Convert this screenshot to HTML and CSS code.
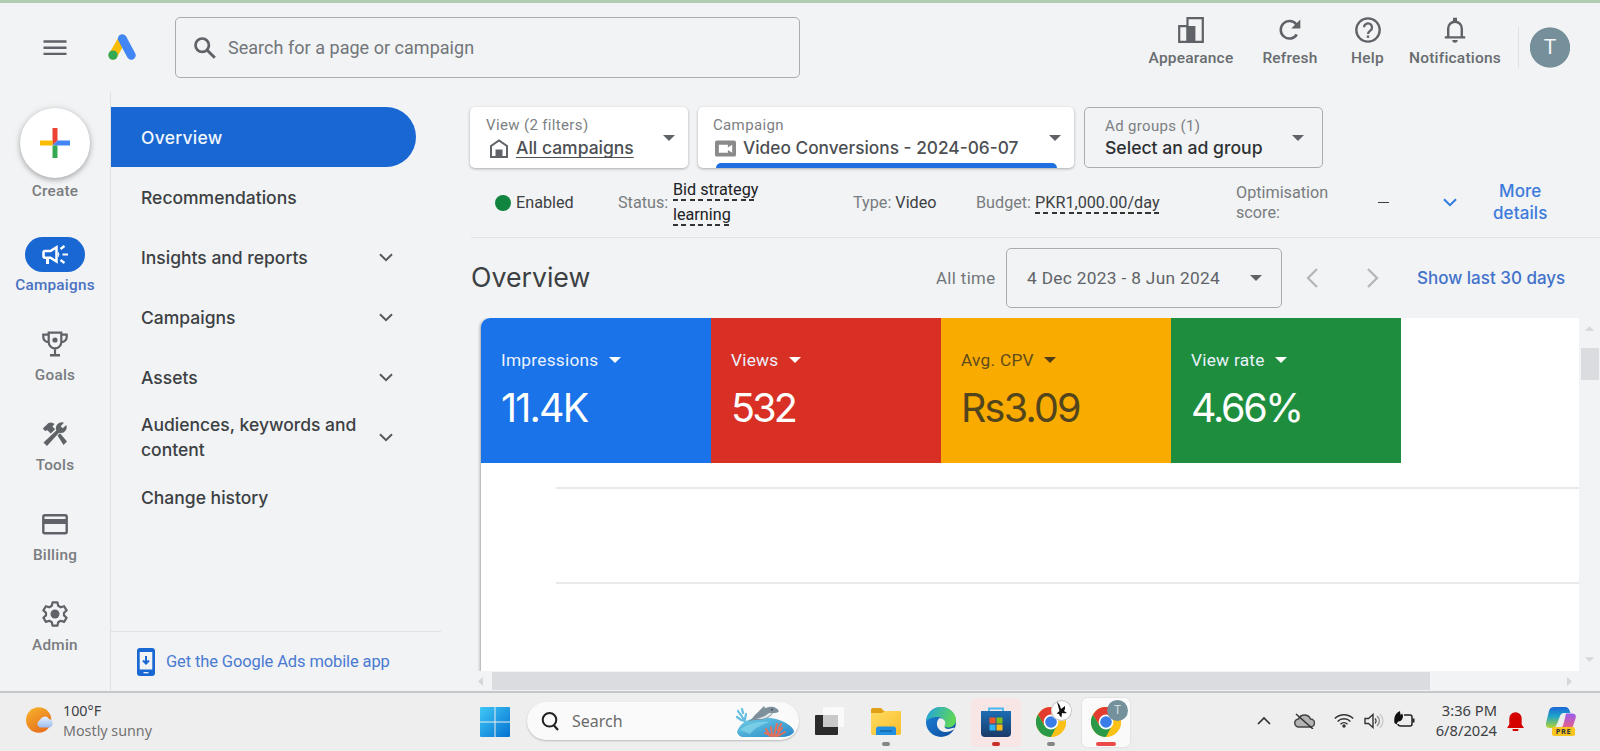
FILE: index.html
```html
<!DOCTYPE html>
<html lang="en">
<head>
<meta charset="utf-8">
<title>Overview - Google Ads</title>
<link rel="stylesheet" href="styles.css">
</head>
<body>
<svg width="0" height="0" class="defs">
  <defs>
    <linearGradient id="win" x1="0" y1="0" x2="1" y2="1"><stop offset="0" stop-color="#3fc8f8"/><stop offset="1" stop-color="#0572d0"/></linearGradient>
    <linearGradient id="sun" x1="0" y1="0" x2="0.6" y2="1"><stop offset="0" stop-color="#f6b52c"/><stop offset="1" stop-color="#e8701c"/></linearGradient>
    <linearGradient id="cloud" x1="0" y1="0" x2="0" y2="1"><stop offset="0" stop-color="#e6f0ff"/><stop offset="1" stop-color="#9dbcf0"/></linearGradient>
    <linearGradient id="sea" x1="0" y1="0" x2="1" y2="1"><stop offset="0" stop-color="#6fd0e6"/><stop offset="1" stop-color="#2a86c8"/></linearGradient>
    <linearGradient id="edgeTop" x1="0" y1="0" x2="1" y2="0.3"><stop offset="0" stop-color="#1fa2e0"/><stop offset="1" stop-color="#5fd65a"/></linearGradient>
    <linearGradient id="edgeLow" x1="0" y1="0" x2="1" y2="1"><stop offset="0" stop-color="#1b86dc"/><stop offset="1" stop-color="#10489a"/></linearGradient>
    <linearGradient id="store" x1="0" y1="0" x2="0" y2="1"><stop offset="0" stop-color="#1c6db4"/><stop offset="1" stop-color="#1b3a68"/></linearGradient>
    <linearGradient id="folder" x1="0" y1="0" x2="1" y2="1"><stop offset="0" stop-color="#ffdc62"/><stop offset="1" stop-color="#f8bd2c"/></linearGradient>
    <linearGradient id="copA" x1="0" y1="0" x2="0" y2="1"><stop offset="0" stop-color="#1b66d8"/><stop offset="0.45" stop-color="#1fa5c8"/><stop offset="1" stop-color="#b7d32e"/></linearGradient>
    <linearGradient id="copB" x1="0" y1="0" x2="0" y2="1"><stop offset="0" stop-color="#9a5cf0"/><stop offset="1" stop-color="#f0607c"/></linearGradient>
    <symbol id="chev" viewBox="0 0 14 9"><path d="M1 1.200l6 6 6-6" fill="none" stroke="currentColor" stroke-width="2"/></symbol>
    <symbol id="caret" viewBox="0 0 12 6"><path d="M0 0h12L6 6z" fill="currentColor"/></symbol>
    <symbol id="chrome" viewBox="0 0 30 30">
      <circle cx="15" cy="15" r="15" fill="#fbc116"/>
      <path d="M15 15L28 7.500A15 15 0 0 0 2 7.500L8.500 18.700z" fill="#e33b2e"/>
      <path d="M2 7.500A15 15 0 0 0 15 30L21.500 18.700 15 15 8.500 18.700z" fill="#2a9a48"/>
      <path d="M15 8.200H28.400A15 15 0 0 1 15 30L21 18.500z" fill="#fbc116"/>
      <circle cx="15" cy="15" r="7.400" fill="#fff"/><circle cx="15" cy="15" r="5.800" fill="#3b7de8"/>
    </symbol>
  </defs>
</svg>

<div class="screen">
  <header class="topbar">
    <svg class="menu-icon" viewBox="0 0 24 16"><path d="M.5 1.500h23M.5 7.700h23M.5 13.900h23" stroke="#5f6368" stroke-width="2.400"/></svg>
    <svg class="logo" viewBox="0 0 28 26">
      <path d="M14.500 5L5 21.300" stroke="#fbbc04" stroke-width="8.600" stroke-linecap="round"/>
      <path d="M14.300 4.700L23.300 21.300" stroke="#4285f4" stroke-width="8.800" stroke-linecap="round"/>
      <circle cx="5" cy="21.100" r="4.700" fill="#34a853"/>
    </svg>
    <div class="searchbox">
      <svg viewBox="0 0 22 22"><circle cx="8.200" cy="8.200" r="6.700" fill="none" stroke="#5f6368" stroke-width="2.700"/><path d="M13 13l7.800 7.800" stroke="#5f6368" stroke-width="3"/></svg>
      <span>Search for a page or campaign</span>
    </div>
    <div class="actions">
      <div class="action a1"><svg viewBox="0 0 26 26"><path d="M9.500 1.200h15.300v23.600H9.500zM1.200 9.200h8.300v15.600H1.200z" fill="none" stroke="#5f6368" stroke-width="2.200"/><path d="M8.600 9h8.800v16H8.600z" fill="#5f6368"/></svg><span>Appearance</span></div>
      <div class="action a2"><svg viewBox="0 0 26 26"><path d="M19.800 17.500A8.700 8.700 0 1 1 19.200 7.300L22 10" fill="none" stroke="#5f6368" stroke-width="2.500"/><path d="M23.300 2.500v9h-9z" fill="#5f6368"/></svg><span>Refresh</span></div>
      <div class="action a3"><svg viewBox="0 0 26 26"><circle cx="13" cy="13" r="11.700" fill="none" stroke="#5f6368" stroke-width="2.300"/><path d="M9 10.300a4 4 0 1 1 6.300 3.300C13.700 14.800 13 15.200 13 17" fill="none" stroke="#5f6368" stroke-width="2.300"/><path d="M11.800 18.500h2.400v2.400h-2.400z" fill="#5f6368"/></svg><span>Help</span></div>
      <div class="action a4"><svg viewBox="0 0 26 26"><path d="M6.200 20v-8.500a6.800 6.800 0 0 1 13.600 0V20" fill="none" stroke="#5f6368" stroke-width="2.400"/><path d="M2.800 19.300h20.400v2.300H2.800zM11 .8h4v4h-4zM10.300 23h5.400a2.700 2.700 0 0 1-5.400 0z" fill="#5f6368"/></svg><span>Notifications</span></div>
    </div>
    <div class="avatar">T</div>
  </header>

  <div class="body">
    <nav class="rail">
      <div class="create"><svg viewBox="0 0 30 30"><path d="M12.500 0h5v12.500L12.500 17.500z" fill="#ea4335"/><path d="M0 12.500h12.500v5H0z" fill="#fbbc04"/><path d="M17.500 12.500H30v5H12.500z" fill="#4285f4"/><path d="M12.500 17.500h5V30h-5z" fill="#34a853"/></svg></div>
      <span class="rail-label create-label">Create</span>
      <div class="rail-item active"><div class="pill"><svg viewBox="0 0 26 20"><path d="M1.500 7.500q0-1.500 1.500-1.500h5.500l6-3.700v14.200l-6-3.700H3q-1.500 0-1.500-1.500z" fill="none" stroke="#fff" stroke-width="2.500"/><path d="M4 13h3v6H4z" fill="#fff"/><path d="M16 6.500q2.500 3 0 6z" fill="#fff"/><path d="M18.500 4l4-3M20.500 9.500H26M18.500 15l4 3" stroke="#fff" stroke-width="2.200"/></svg></div><span class="rail-label">Campaigns</span></div>
      <div class="rail-item"><svg viewBox="0 0 26 26"><path d="M6.700 1.700h12.600V11a6.300 6.300 0 0 1-12.600 0zM6.700 3.700H1.300V6a5 5 0 0 0 5.600 5M19.300 3.700h5.400V6a5 5 0 0 1-5.600 5M13 17v7" fill="none" stroke="#5f6368" stroke-width="2.200"/><path d="M8 23h10v2.500H8z" fill="#5f6368"/><circle cx="13" cy="9" r="2.600" fill="#5f6368"/></svg><span class="rail-label">Goals</span></div>
      <div class="rail-item"><svg viewBox="0 0 26 26"><path d="M.8 7.500L6.500 2q3.500-1.500 6 1L10.500 5.500l2.700 2.700-4.500 4.300-3.300-3.300L3 10zM15.500 14.500l2.500-2.300 7 8.300-3.500 3.500zM1.500 21.500L14.300 9.500a6 6 0 0 1 7.700-7.800l-3.300 3.600 2 2 3.600-3.300a6 6 0 0 1-7.300 7.800L5 25z" fill="#5f6368"/></svg><span class="rail-label">Tools</span></div>
      <div class="rail-item"><svg viewBox="0 0 26 26"><rect x="1.300" y="4.200" width="23.400" height="18" rx="1.500" fill="none" stroke="#5f6368" stroke-width="2.400"/><path d="M1 8h24v5H1z" fill="#5f6368"/></svg><span class="rail-label">Billing</span></div>
      <div class="rail-item"><svg viewBox="0 0 26 26"><path d="M10.600 1.300h4.800l.8 3.500 2.500 1.500 3.400-1.100 2.500 4.200-2.600 2.300v2.700l2.600 2.300-2.500 4.200-3.400-1.100-2.500 1.500-.8 3.400h-4.800l-.8-3.400-2.500-1.500-3.400 1.100-2.500-4.200L4 14.400v-2.700L1.400 9.400l2.500-4.200 3.400 1.100 2.500-1.500z" fill="none" stroke="#5f6368" stroke-width="2.200" stroke-linejoin="round"/><circle cx="13" cy="13" r="4.500" fill="#5f6368"/></svg><span class="rail-label">Admin</span></div>
    </nav>

    <aside class="side">
      <div class="side-item selected"><span>Overview</span></div>
      <div class="side-item"><span>Recommendations</span></div>
      <div class="side-item"><span>Insights and reports</span><svg><use href="#chev"/></svg></div>
      <div class="side-item"><span>Campaigns</span><svg><use href="#chev"/></svg></div>
      <div class="side-item"><span>Assets</span><svg><use href="#chev"/></svg></div>
      <div class="side-item"><span>Audiences, keywords and<br>content</span><svg><use href="#chev"/></svg></div>
      <div class="side-item"><span>Change history</span></div>
      <div class="mobile">
        <svg viewBox="0 0 18 28"><rect width="18" height="28" rx="3" fill="#1967d2"/><path d="M2.700 4h12.600v17.500H2.700z" fill="#f1f3f4"/><path d="M9 8v7M6 12.500l3 3 3-3" fill="none" stroke="#1967d2" stroke-width="2"/><path d="M6.500 24.700h5" stroke="#fff" stroke-width="1.200"/></svg>
        <span>Get the Google Ads mobile app</span>
      </div>
    </aside>

    <main class="main">
      <div class="scopes">
        <div class="scope view">
          <div class="scope-text"><small>View (2 filters)</small>
          <div class="scope-line"><svg viewBox="0 0 20 19"><path d="M2 18V7l8-5.500L18 7v11z" fill="none" stroke="#5f6368" stroke-width="2"/><path d="M6.500 10.500h7V18h-7z" fill="#5f6368"/></svg><u>All campaigns</u></div></div>
          <svg class="caret"><use href="#caret"/></svg>
        </div>
        <div class="scope campaign">
          <div class="scope-text"><small>Campaign</small>
          <div class="scope-line"><svg viewBox="0 0 22 17"><rect width="22" height="17" rx="2" fill="#8a8a8a"/><path d="M4 4.500h9.500v3L18 4.500v8.500l-4.500-3v3H4z" fill="#fff"/></svg><span>Video Conversions - 2024-06-07</span></div></div>
          <svg class="caret"><use href="#caret"/></svg>
          <i class="underbar"></i>
        </div>
        <div class="scope groups">
          <div class="scope-text"><small>Ad groups (1)</small><div class="scope-line"><span>Select an ad group</span></div></div>
          <svg class="caret"><use href="#caret"/></svg>
        </div>
      </div>

      <div class="status">
        <span class="enabled"><i></i>Enabled</span>
        <span class="label st">Status:</span><span class="bid"><b>Bid strategy</b><br><b>learning</b></span>
        <span class="type"><em>Type:</em> Video</span>
        <span class="budget"><em>Budget:</em> <b>PKR1,000.00/day</b></span>
        <span class="label opt">Optimisation<br>score:</span>
        <i class="dash"></i>
        <svg class="more-chev"><use href="#chev"/></svg>
        <span class="more">More<br>details</span>
      </div>

      <div class="titlebar">
        <h1>Overview</h1>
        <span class="alltime">All time</span>
        <div class="daterange"><span>4 Dec 2023 - 8 Jun 2024</span><svg class="caret"><use href="#caret"/></svg></div>
        <svg class="pager prev" viewBox="0 0 12 20"><path d="M11 1L2 10l9 9" fill="none" stroke="#b4b6b8" stroke-width="2.300"/></svg>
        <svg class="pager" viewBox="0 0 12 20"><path d="M1 1l9 9-9 9" fill="none" stroke="#b4b6b8" stroke-width="2.300"/></svg>
        <span class="last30">Show last 30 days</span>
      </div>

      <div class="viewport">
        <section class="panel">
          <div class="tiles">
            <div class="tile blue"><div class="metric"><span>Impressions</span><svg class="caret"><use href="#caret"/></svg></div><strong>11.4K</strong></div>
            <div class="tile red"><div class="metric"><span>Views</span><svg class="caret"><use href="#caret"/></svg></div><strong>532</strong></div>
            <div class="tile yellow"><div class="metric"><span>Avg. CPV</span><svg class="caret"><use href="#caret"/></svg></div><strong>Rs3.09</strong></div>
            <div class="tile green"><div class="metric"><span>View rate</span><svg class="caret"><use href="#caret"/></svg></div><strong>4.66%</strong></div>
          </div>
          <div class="chart"><hr><hr></div>
        </section>
        <div class="vscroll"><svg class="up"><use href="#caret"/></svg><i></i><svg class="down"><use href="#caret"/></svg></div>
      </div>
      <div class="hscroll"><svg viewBox="0 0 5 9"><path d="M5 0v9L0 4.500z" fill="#d5d6d8"/></svg><i></i><svg class="right" viewBox="0 0 5 9"><path d="M0 0v9l5-4.500z" fill="#d5d6d8"/></svg></div>
    </main>
  </div>

  <footer class="taskbar">
    <div class="weather">
      <svg viewBox="0 0 28 26"><circle cx="12.700" cy="13" r="12.700" fill="url(#sun)"/><path d="M14 21.500a4 4 0 0 1 0-7.500 5 5 0 0 1 9-1 4.300 4.300 0 0 1 0 8.500z" fill="url(#cloud)" transform="translate(0 -1)"/></svg>
      <div><span class="temp">100°F</span><span class="cond">Mostly sunny</span></div>
    </div>
    <div class="apps">
      <svg class="start" viewBox="0 0 30 30"><path d="M1 0h13.500v14.500H0V1q0-1 1-1zM15.500 0H29q1 0 1 1v13.500H15.500zM0 15.500h14.500V30H1q-1 0-1-1zM15.500 15.500H30V29q0 1-1 1H15.500z" fill="url(#win)"/></svg>
      <div class="winsearch">
        <svg viewBox="0 0 18 19"><circle cx="8.500" cy="7.800" r="6.800" fill="none" stroke="#222" stroke-width="2"/><path d="M12.800 13.200l4.200 4.800" stroke="#222" stroke-width="2.200"/></svg>
        <span>Search</span>
        <svg class="dolphin" viewBox="0 0 58 32"><path d="M1 27c2-7 9-13 19-14 13-1 22 0 30 5 5 3 8 6 8 9-2 3-6 5-14 5H8c-4 0-6-2-7-5z" fill="url(#sea)"/><path d="M4 25c8-7 20-9 30-8-8 2-16 6-20 12z" fill="#8fdcec" opacity=".6"/><path d="M11 17c3-1 5-3 7-6 4-5 9-8 15-9 5-1 8 1 10 4-1 2-4 2-6 2-3 5-9 7-16 7-4 0-7 1-10 2zM23 6l5-5 2 4z" fill="#7e909b"/><path d="M20 14c6-1 9-3 13-6l3 0c-3 5-9 6.500-16 6z" fill="#dfe6ea"/><circle cx="36" cy="4.800" r=".8" fill="#222"/><path d="M2 6l2 3M6 4l1 4M1 12l4 3 4 1M10 9l-1 5M5 10l3 5" fill="none" stroke="#63bde2" stroke-width="2.200" stroke-linecap="round"/><path d="M34 31l-4-7M36 30l-1-8M38 31l3-12M40 31l6-8M42 31l7-4M29 28l8 3M45 19l-3 7" stroke="#e8705a" stroke-width="2" stroke-linecap="round"/></svg>
      </div>
      <svg class="taskview" viewBox="0 0 30 30"><rect y="8" width="23" height="20" rx="1" fill="#2b2b2b"/><rect x="8" y="0" width="21" height="20" rx="1.500" fill="#fff" opacity=".7"/><path d="M8 8h15v12H8z" fill="#c9c9c9"/></svg>
      <div class="app folder"><svg viewBox="0 0 30 28"><path d="M0 2q0-2 2-2h8l3 3h15q2 0 2 2v10H0z" fill="#dfa016"/><path d="M0 5h11l3-2h14q2 0 2 2v20q0 2-2 2H2q-2 0-2-2z" fill="url(#folder)"/><path d="M5 27v-6q0-2.500 2.500-2.500h15q2.500 0 2.500 2.500v6z" fill="#2190e0"/><path d="M9 23h12" stroke="#1263a8" stroke-width="1.400"/></svg><i></i></div>
      <div class="app"><svg viewBox="0 0 30 30"><circle cx="15" cy="15" r="15" fill="url(#edgeLow)"/><path d="M.2 14C1 5 8 0 15 0c9 0 15 6.500 15 13 0 5-4 7.500-8 7.500-3 0-4.500-1-4-2 2-4-1-8.500-6-8.500C6.500 10 2 12 .2 14z" fill="url(#edgeTop)"/><path d="M13 11.500c-3 3-3 9 1.500 12 4 2.500 9 2 14-1.500.5-1 .3-1.500-1-1.200-4 1.700-9 1.700-9-1.300 0-1.500.8-1.500.8-3.800 0-2-3-5.200-6.300-4.200z" fill="#eee"/></svg></div>
      <div class="app store"><svg viewBox="0 0 30 30"><path d="M8 5V1.500h14V5" fill="none" stroke="#45b8ee" stroke-width="1.800"/><path d="M0 4h30v22q0 4-4 4H4q-4 0-4-4z" fill="url(#store)"/><path d="M8.500 10.500h6v6h-6z" fill="#f1562b"/><path d="M15.500 10.500h6v6h-6z" fill="#80bc1a"/><path d="M8.500 17.500h6v6h-6z" fill="#2fb3f0"/><path d="M15.500 17.500h6v6h-6z" fill="#fdbb16"/></svg><i></i></div>
      <div class="app"><svg><use href="#chrome"/></svg><span class="badge bird"><svg viewBox="0 0 20 20"><path d="M6 1.500q3 3 4 7.500l4-3q.5 2.500-1 5l3 2q-3 .5-5 0l-.5 4.500q-2-1-2.500-3.500l-2.500-.5 3-2.500Q7 6 6 1.500z" fill="#111"/></svg></span><i></i></div>
      <div class="app current"><svg><use href="#chrome"/></svg><span class="badge">T</span><i></i></div>
    </div>
    <div class="tray">
      <svg class="t1" viewBox="0 0 14 9"><path d="M1 8l6-6 6 6" fill="none" stroke="#333" stroke-width="1.700"/></svg>
      <svg class="t2" viewBox="0 0 21 16"><path d="M5 14a4 4 0 0 1-.5-8 6.500 6.500 0 0 1 12 0 4 4 0 0 1 0 8z" fill="#b3b3b3" stroke="#444" stroke-width="1.500"/><path d="M2 1l17 15" stroke="#333" stroke-width="1.500"/></svg>
      <svg class="t3" viewBox="0 0 20 15"><path d="M.8 5.500a13 13 0 0 1 18.400 0M3.600 8.500a9 9 0 0 1 12.800 0M6.500 11.200a5 5 0 0 1 7 0" fill="none" stroke="#333" stroke-width="1.500"/><circle cx="10" cy="13" r="1.700" fill="#333"/></svg>
      <svg class="t4" viewBox="0 0 21 16"><path d="M1 5.500h3.500L9 1.500v13l-4.500-4H1z" fill="none" stroke="#333" stroke-width="1.400"/><path d="M11 5.500a3.500 3.500 0 0 1 0 5" fill="none" stroke="#444" stroke-width="1.300"/><path d="M13 3a6.500 6.500 0 0 1 0 10" fill="none" stroke="#888" stroke-width="1.300"/><path d="M15.500 1a9 9 0 0 1 0 14" fill="none" stroke="#c8c8c8" stroke-width="1.300"/></svg>
      <svg class="t5" viewBox="0 0 21 17"><path d="M10 4h6q2 0 2 2v7q0 2-2 2H7q-3 0-3-2" fill="none" stroke="#222" stroke-width="1.500"/><path d="M18.500 7.500h2v4h-2z" fill="#222"/><path d="M.5 12Q-1 3 6 0l.5 4L8 2.500q2 2.500 0 6-1.500 2.500-4 2l-1.500 3z" fill="#111"/></svg>
      <div class="clock"><span class="time">3:36 PM</span><span class="date">6/8/2024</span></div>
      <svg class="bell" viewBox="0 0 17 19"><path d="M0 16l2.300-3.500V6.500a6.200 6.200 0 0 1 12.400 0v6L17 16zM5.500 17h6a3 3 0 0 1-6 0z" fill="#d40000"/></svg>
      <div class="copilot"><svg viewBox="0 0 30 24"><path d="M8 0h11q3.500 0 4.500 3.500L24.500 6H18q-3 0-4 3l-3 8q-1.500 4-5 4H3.500Q-1 21 0 16L3 4q1-4 5-4z" fill="url(#copA)"/><path d="M20 6.500h6q5 0 3.500 5L27 19q-1 3-5 3h-9q3.500-1 4.500-5z" fill="url(#copB)"/></svg><span>PRE</span></div>
    </div>
  </footer>
</div>
</body>
</html>
```
FILE: styles.css
```css
* { box-sizing: border-box; }
body { margin: 0; background: #f1f3f4; font-family: Roboto, "Liberation Sans", sans-serif; color: #3c4043; overflow: hidden; }
svg { display: block; flex: none; }
.defs { position: absolute; }
i, em { font-style: normal; }
.screen { width: 1600px; height: 751px; display: flex; flex-direction: column; border-top: 3px solid #b2ccb2; }

/* Top bar */
.topbar { height: 89px; flex: none; display: flex; align-items: flex-start; }
.menu-icon { width: 24px; height: 16px; margin: 37px 0 0 43px; }
.logo { width: 28px; height: 26px; margin: 31px 0 0 41px; }
.searchbox { width: 625px; height: 61px; margin: 14px 0 0 39px; border: 1.500px solid #a9acb0; border-radius: 5px; display: flex; align-items: center; gap: 12px; padding-left: 18px; font-size: 18px; letter-spacing: .03px; color: #72767a; }
.searchbox svg { width: 22px; height: 22px; }
.actions { display: flex; margin: 14px 0 0 341px; }
.action { display: flex; flex-direction: column; align-items: center; font-size: 15.500px; font-weight: 500; letter-spacing: .2px; color: #696c70; line-height: 18px; gap: 6px; }
.action svg { width: 26px; height: 26px; }
.a1 { width: 100px; } .a2 { width: 98px; } .a3 { width: 57px; } .a4 { width: 118px; }
.avatar { margin: 24px 0 0 4px; padding-left: 10px; border-left: 1px solid #dfe1e3; width: 53px; height: 41px; display: flex; justify-content: center; color: #f4f6f7; font-size: 21px; line-height: 41px; background: radial-gradient(circle 20.500px at 31px 20.500px, #758f9b 96%, transparent 100%); }

/* Shell */
.body { height: 599px; flex: none; display: flex; }
.rail { width: 111px; border-right: 1.500px solid #dfe1e5; display: flex; flex-direction: column; align-items: center; }
.create { width: 70px; height: 70px; margin: 16px 0 0; flex: none; border-radius: 50%; background: #fff; box-shadow: 0 2px 5px #0000003d, 0 1px 9px #0000001f; display: grid; place-items: center; }
.create svg { width: 30px; height: 30px; }
.rail-label { font-size: 15.300px; font-weight: 500; letter-spacing: .25px; line-height: 18px; color: #797c80; }
.create-label { margin-top: 4px; }
.rail-item { height: 90px; flex: none; display: flex; flex-direction: column; align-items: center; gap: 9px; padding-top: 14px; }
.rail-item > svg { width: 26px; height: 26px; }
.rail-item.active { height: 120px; padding-top: 37px; gap: 4px; margin-bottom: -3px; }
.active .rail-label { color: #4a72c2; }
.pill { width: 60px; height: 35px; border-radius: 18px; background: #1967d2; display: grid; place-items: center; }
.pill svg { width: 26px; height: 20px; }

.side { width: 330px; display: flex; flex-direction: column; padding-top: 15px; }
.side-item { height: 60px; flex: none; padding: 0 48px 0 30px; display: flex; align-items: center; justify-content: space-between; font: 500 17.500px/25px Inter, sans-serif; color: #3c4043; white-space: nowrap; }
.side-item svg { width: 14px; height: 9px; color: #55595d; }
.side-item.selected { width: 305px; background: #1967d2; border-radius: 0 31px 31px 0; color: #f1f6fd; letter-spacing: .25px; }
.mobile { margin-top: auto; height: 60px; border-top: 1px solid #dfe1e5; display: flex; align-items: center; gap: 11px; padding-left: 26px; font-size: 16.500px; letter-spacing: -.12px; color: #4a7ad2; }
.mobile svg { width: 18px; height: 28px; }

/* Main column */
.main { width: 1159px; display: flex; flex-direction: column; }
.scopes { display: flex; gap: 10px; padding: 15px 0 0 29px; height: 76px; flex: none; }
.scope { height: 61px; flex: none; border-radius: 5px; background: #fff; box-shadow: 0 1px 3px #0000004d; display: flex; justify-content: space-between; padding: 9px 13px 0 16px; }
.view { width: 218px; }
.campaign { width: 376px; position: relative; }
.groups { width: 239px; background: none; box-shadow: none; border: 1.500px solid #a9acb0; padding: 9px 18px 0 20px; }
.scope small { display: block; font-size: 15px; line-height: 18px; letter-spacing: .35px; color: #7c7f83; }
.scope-line { display: flex; align-items: center; gap: 7px; height: 26px; font: 500 17.300px/26px Inter, sans-serif; color: #4c4f53; margin: 1px 0 0 3px; white-space: nowrap; }
.view .scope-line { font-size: 17.500px; }
.scope-line svg { width: 20px; height: 19px; }
.campaign small { margin-left: -1px; }
.campaign .scope-line { margin-left: 1px; }
.campaign .scope-line svg { width: 21px; height: 17px; }
.groups .scope-line { margin: 0; color: #2d3033; font-size: 17.600px; }
.scope-line u { text-underline-offset: 3px; text-decoration-skip-ink: none; }
.caret { width: 12px; height: 6px; color: #5f6368; }
.scope .caret { margin-top: 19px; }
.groups .caret { margin-top: 18px; }
.underbar { position: absolute; left: 18px; bottom: 0; width: 341px; height: 5px; border-radius: 5px 5px 0 0; background: #1f6fe0; }

.status { height: 70px; flex: none; margin-left: 30px; border-bottom: 1px solid #e0e2e5; display: flex; align-items: center; font-size: 16.200px; color: #3c4043; white-space: nowrap; }
.status > * { flex: none; }
.status em, .label { color: #797c80; }
.enabled { display: flex; align-items: center; gap: 5px; margin-left: 24px; width: 123px; }
.enabled i { width: 16px; height: 16px; border-radius: 50%; background: #11843f; }
.st { width: 55px; }
.bid { line-height: 24.500px; width: 180px; color: #202124; }
.status b { font-weight: 400; background: repeating-linear-gradient(90deg, #333 0 5px, transparent 5px 8.500px) 0 100%/100% 2px no-repeat; padding-bottom: 2px; }
.type { width: 123px; } .budget { width: 260px; }
.opt { line-height: 20px; width: 142px; }
.dash { width: 11px; height: 1.500px; background: #3c4043; }
.more-chev { width: 14px; height: 9px; color: #3079df; margin-left: 54px; }
.more { font: 500 17px/22px Inter, sans-serif; letter-spacing: .1px; color: #3c7bdc; text-align: center; margin-left: 36px; margin-top: -2px; }

.titlebar { height: 80px; flex: none; display: flex; align-items: center; padding-left: 30px; }
h1 { font: 400 26.700px/36px Inter, sans-serif; margin: -2px 0 0; width: 465px; }
.alltime { width: 70px; font-size: 16.800px; letter-spacing: .38px; color: #72767a; }
.daterange { width: 276px; height: 60px; border: 1.500px solid #a9acb0; border-radius: 5px; display: flex; align-items: center; justify-content: space-between; padding: 0 19px 0 20px; font-size: 17.300px; letter-spacing: .32px; color: #5f6368; }
.pager { width: 12px; height: 20px; margin-left: 49px; }
.pager.prev { margin-left: 24px; }
.last30 { margin-left: 38px; font: 500 17px/24px Inter, sans-serif; color: #4272cb; white-space: nowrap; }

.viewport { height: 353px; flex: none; display: flex; padding-left: 40px; }
.panel { width: 1098px; background: #fff; border-radius: 9px 0 0 0; box-shadow: -1px 1px 3px #00000055; clip-path: inset(0 0 0 -6px); }
.tiles { display: flex; height: 145px; }
.tile { width: 230px; padding: 31px 20px 0; color: #e9f1fd; }
.blue { background: #1a73e8; border-radius: 9px 0 0 0; } .red { background: #d93025; } .yellow { background: #f9ab00; color: #5f4c1d; } .green { background: #1e8e3e; }
.metric { display: flex; align-items: center; gap: 10px; height: 21px; font-size: 17.300px; letter-spacing: .25px; }
.metric .caret { color: #fff; }
.yellow .caret { color: #4c3d15; }
.tile strong { display: block; font: 400 39.500px/48px Inter, sans-serif; letter-spacing: -1.800px; color: #fff; margin-top: 14px; }
.red strong { letter-spacing: -2.800px; } .green strong { letter-spacing: -2.300px; }
.yellow strong { color: #52441c; }
.chart { padding: 24px 0 0 75px; display: flex; flex-direction: column; gap: 93px; }
.chart hr { width: 100%; height: 2px; margin: 0; border: 0; background: #e8e9eb; }
.vscroll { width: 21px; display: flex; flex-direction: column; align-items: center; padding-top: 8px; }
.vscroll svg { width: 9px; height: 5px; color: #d5d6d8; }
.vscroll .up { transform: scaleY(-1); }
.vscroll i { width: 18px; height: 32px; margin-top: 17px; background: #dadce0; }
.vscroll .down { margin-top: auto; margin-bottom: 9px; }
.hscroll { height: 20px; display: flex; align-items: center; padding-left: 37px; }
.hscroll svg { width: 5px; height: 9px; }
.hscroll i { width: 938px; height: 18px; margin-left: 9px; background: #dadce0; }
.hscroll .right { margin-left: 137px; }

/* Taskbar */
.taskbar { height: 60px; border-top: 2px solid #c5c6c8; background: #eee; display: flex; font-family: "Noto Sans", sans-serif; }
.weather { display: flex; width: 480px; flex: none; padding: 8px 0 0 26px; font-size: 14.300px; line-height: 20px; }
.weather svg { width: 28px; height: 26px; margin: 6px 9px 0 0; }
.weather span { display: block; }
.cond { color: #727272; }
.apps { display: flex; align-items: flex-start; width: 770px; flex: none; padding-top: 9px; }
.start { width: 30px; height: 30px; margin: 5px 17px 0 0; }
.winsearch { width: 272px; height: 38px; border-radius: 19px; background: #fafafa; box-shadow: 0 1px 2px #00000038; display: flex; align-items: center; padding-left: 14px; font-size: 16px; color: #6a6a6a; }
.winsearch svg { width: 18px; height: 19px; margin-right: 13px; }
.winsearch span { width: 164px; }
.winsearch .dolphin { width: 58px; height: 32px; margin: 0; }
.taskview { width: 30px; height: 30px; margin: 5px 14px 0 16px; }
.app { width: 50px; height: 49px; margin-left: 5px; margin-top: -4px; border-radius: 5px; display: flex; flex-direction: column; align-items: center; position: relative; flex: none; padding-top: 9px; }
.app > svg { width: 30px; height: 30px; }
.app.folder { margin-left: 2px; }
.app > i { width: 8px; height: 4px; border-radius: 2px; background: #858585; margin-top: 5px; }
.store { background: #f8e5e6; }
.store > i { background: #c62f2a; }
.current { background: #fafafa; box-shadow: 0 0 2px #00000026; width: 48px; margin-left: 6px; }
.current > i { width: 20px; background: #ec4a4a; }
.badge { position: absolute; left: 25px; top: 2px; width: 21px; height: 21px; border-radius: 50%; background: #74909b; color: #d5dfe3; font-size: 12px; line-height: 20px; text-align: center; }
.bird { background: #fff; box-shadow: inset 0 0 0 1px #c5c5c5; }
.bird svg { width: 20px; height: 20px; }
.tray { display: flex; flex: none; width: 350px; padding-left: 7px; }
.t1 { width: 14px; height: 9px; margin-top: 23px; }
.t2 { width: 21px; height: 16px; margin: 20px 0 0 23px; }
.t3 { width: 20px; height: 15px; margin: 20px 0 0 19px; }
.t4 { width: 21px; height: 16px; margin: 20px 0 0 10px; }
.t5 { width: 21px; height: 17px; margin: 18px 0 0 9px; }
.clock { width: 82px; text-align: right; font-size: 14.700px; line-height: 20px; padding-top: 7px; white-space: nowrap; }
.clock span { display: block; }
.bell { width: 17px; height: 19px; margin: 19px 0 0 10px; }
.copilot { position: relative; margin: 14px 0 0 22px; }
.copilot svg { width: 30px; height: 24px; }
.copilot span { position: absolute; left: 6px; top: 20px; width: 23px; height: 9px; border-radius: 2px; background: #f8c51f; color: #333; font: 700 7.500px/9px "Open Sans", sans-serif; text-align: center; letter-spacing: .6px; }
```
